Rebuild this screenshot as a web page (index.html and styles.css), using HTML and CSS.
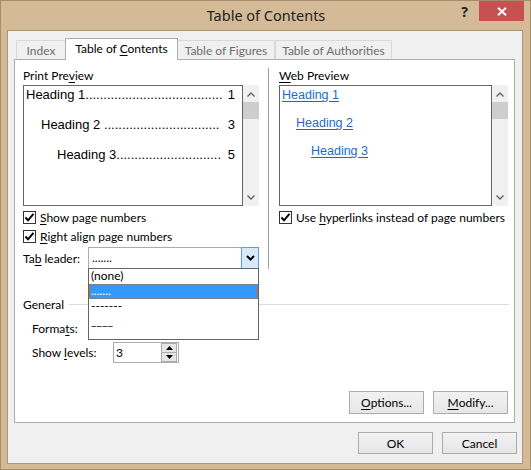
FILE: index.html
```html
<!DOCTYPE html>
<html lang="en">
<head>
<meta charset="utf-8">
<title>Table of Contents</title>
<link rel="stylesheet" href="styles.css">
</head>
<body>
<div class="window">
  <div class="titlebar">
    <div class="tb-spacer"></div>
    <div class="title">Table of Contents</div>
    <div class="tb-controls">
      <div class="help">?</div>
      <div class="close">
        <svg width="10" height="9" viewBox="0 0 10 9"><path d="M1 0.8 L9 8.2 M9 0.8 L1 8.2" stroke="#fff" stroke-width="1.9" fill="none"/></svg>
      </div>
    </div>
  </div>
  <div class="client">
    <div class="tabs">
      <div class="tab t-index">Index</div>
      <div class="tab active t-toc">Table of <u>C</u>ontents</div>
      <div class="tab t-fig">Table of Figures</div>
      <div class="tab t-auth">Table of Authorities</div>
    </div>
    <div class="panel">
      <div class="top">
        <div class="col col-left">
          <div class="label">Print Pre<u>v</u>iew</div>
          <div class="preview">
            <div class="pbox">
              <div class="toc lv1"><span>Heading 1</span><span class="dots">......................................</span><span class="num">1</span></div>
              <div class="toc lv2"><span>Heading 2 </span><span class="dots">................................</span><span class="num">3</span></div>
              <div class="toc lv3"><span>Heading 3</span><span class="dots">.............................</span><span class="num">5</span></div>
            </div>
            <div class="scrollbar">
              <svg class="arr" width="8" height="5" viewBox="0 0 8 5"><polyline points="0.5,4.5 4,1 7.5,4.5" fill="none" stroke="#606060" stroke-width="1.3"/></svg>
              <div class="thumb"></div>
              <div class="track"></div>
              <svg class="arr" width="8" height="5" viewBox="0 0 8 5"><polyline points="0.5,0.5 4,4 7.5,0.5" fill="none" stroke="#606060" stroke-width="1.3"/></svg>
            </div>
          </div>
          <div class="checks">
            <div class="check">
              <span class="cbox"><svg width="11" height="11" viewBox="0 0 11 11"><polyline points="1.5,5.5 4,8.3 9.5,1.8" fill="none" stroke="#000" stroke-width="2"/></svg></span>
              <span><u>S</u>how page numbers</span>
            </div>
            <div class="check">
              <span class="cbox"><svg width="11" height="11" viewBox="0 0 11 11"><polyline points="1.5,5.5 4,8.3 9.5,1.8" fill="none" stroke="#000" stroke-width="2"/></svg></span>
              <span><u>R</u>ight align page numbers</span>
            </div>
          </div>
          <div class="leader-row">
            <span class="leader-label">Ta<u>b</u> leader:</span>
            <div class="combo open">
              <span class="combo-text">.......</span>
              <span class="combo-btn"><svg width="9" height="6" viewBox="0 0 9 6"><polyline points="1,1 4.5,4.5 8,1" fill="none" stroke="#000" stroke-width="2"/></svg></span>
              <div class="droplist">
                <div class="item">(none)</div>
                <div class="item selected">.......</div>
                <div class="item">-------</div>
                <div class="item">____</div>
              </div>
            </div>
          </div>
        </div>
        <div class="sep"></div>
        <div class="col col-right">
          <div class="label"><u>W</u>eb Preview</div>
          <div class="preview">
            <div class="pbox web">
              <div class="link lv1">Heading 1</div>
              <div class="link lv2">Heading 2</div>
              <div class="link lv3">Heading 3</div>
            </div>
            <div class="scrollbar">
              <svg class="arr" width="8" height="5" viewBox="0 0 8 5"><polyline points="0.5,4.5 4,1 7.5,4.5" fill="none" stroke="#606060" stroke-width="1.3"/></svg>
              <div class="thumb"></div>
              <div class="track"></div>
              <svg class="arr" width="8" height="5" viewBox="0 0 8 5"><polyline points="0.5,0.5 4,4 7.5,0.5" fill="none" stroke="#606060" stroke-width="1.3"/></svg>
            </div>
          </div>
          <div class="checks">
            <div class="check">
              <span class="cbox"><svg width="11" height="11" viewBox="0 0 11 11"><polyline points="1.5,5.5 4,8.3 9.5,1.8" fill="none" stroke="#000" stroke-width="2"/></svg></span>
              <span>Use <u>h</u>yperlinks instead of page numbers</span>
            </div>
          </div>
        </div>
      </div>
      <div class="general">
        <span>General</span>
        <span class="gline"></span>
      </div>
      <div class="frow formats-row">
        <span class="flabel">Forma<u>t</u>s:</span>
        <div class="combo plain"></div>
      </div>
      <div class="frow levels-row">
        <span class="flabel">Show <u>l</u>evels:</span>
        <div class="spin">
          <span class="spin-text">3</span>
          <span class="spin-btns">
            <span class="sb up"><svg width="7" height="4" viewBox="0 0 7 4"><polygon points="0,4 3.5,0 7,4" fill="#000"/></svg></span>
            <span class="sb down"><svg width="7" height="4" viewBox="0 0 7 4"><polygon points="0,0 3.5,4 7,0" fill="#000"/></svg></span>
          </span>
        </div>
      </div>
      <div class="panel-buttons">
        <div class="btn"><u>O</u>ptions...</div>
        <div class="btn"><u>M</u>odify...</div>
      </div>
    </div>
    <div class="dialog-buttons">
      <div class="btn">OK</div>
      <div class="btn">Cancel</div>
    </div>
  </div>
</div>
</body>
</html>
```

FILE: styles.css
```css
* { box-sizing: border-box; margin: 0; padding: 0; }
html, body { width: 531px; height: 470px; overflow: hidden; }
body {
  font-family: "Lato", "Noto Sans", sans-serif;
  font-size: 12px;
  color: #000;
  background: #d4ba96;
}
u { text-decoration: underline; text-underline-offset: 2px; }

.window {
  width: 531px;
  height: 470px;
  background: #d4ba96;
  border: 1px solid #a88d69;
  display: flex;
  flex-direction: column;
}

/* title bar */
.titlebar {
  height: 29px;
  display: grid;
  grid-template-columns: 1fr auto 1fr;
}
.title {
  font-family: "Noto Sans", sans-serif;
  font-size: 14.5px;
  line-height: 29px;
  color: #222;
  padding-left: 1px;
}
.tb-controls {
  display: flex;
  justify-content: flex-end;
  align-items: flex-start;
  padding-right: 6px;
}
.help {
  font-family: "Noto Sans", sans-serif;
  font-size: 14px;
  font-weight: bold;
  line-height: 22px;
  color: #222;
  margin-right: 11px;
}
.close {
  width: 45px;
  height: 20px;
  background: #c75050;
  display: flex;
  align-items: center;
  justify-content: center;
}

/* client */
.client {
  margin: 0 7px 5px 6px;
  height: 434px;
  border: 1px solid #ae9574;
  background: #f0f0f0;
  padding: 7px 7px 0 6px;
  display: flex;
  flex-direction: column;
}

.tabs {
  height: 21px;
  display: flex;
  align-items: flex-end;
  padding-left: 2px;
}
.tab {
  height: 19px;
  border: 1px solid #d9d9d9;
  border-bottom: none;
  background: #f0f0f0;
  color: #6d6d6d;
  line-height: 19px;
  text-align: center;
  white-space: nowrap;
}
.t-index { width: 50px; }
.t-toc { width: 113px; margin-left: -1px; }
.t-fig { width: 98px; margin-left: -1px; }
.t-auth { width: 117px; margin-left: 0; }
.tab.active {
  height: 22px;
  margin-bottom: -1px;
  background: #fff;
  border-color: #acacac;
  color: #000;
  position: relative;
  z-index: 2;
  line-height: 20px;
}

.panel {
  height: 364px;
  border: 1px solid #adadad;
  background: #fff;
  display: flex;
  flex-direction: column;
}

.top {
  display: flex;
  padding-bottom: 24px;
}
.col { padding-top: 9px; }
.col-left { width: 244px; padding-left: 8px; }
.col-right { width: 240px; padding-left: 10px; }
.sep {
  width: 1px;
  margin-top: 8px;
  margin-left: 9px;
  background: #a0a0a0;
}
.label { height: 16px; line-height: 14px; }

.preview { display: flex; height: 121px; }
.pbox {
  border: 1px solid #646464;
  flex: 1;
  background: #fff;
  padding-right: 7px;
  font-family: "Liberation Sans", Arial, sans-serif;
  font-size: 13px;
}
.col-left .pbox { width: 220px; flex: none; }
.pbox.web { width: 213px; flex: none; padding-right: 0; }
.scrollbar {
  width: 16px;
  background: #f0f0f0;
  display: flex;
  flex-direction: column;
  align-items: center;
}
.scrollbar .arr { margin-top: 7px; flex: none; }
.scrollbar .arr:last-child { margin-top: 0; margin-bottom: 6px; }
.thumb { width: 16px; height: 17px; background: #cdcdcd; margin-top: 5px; }
.track { flex: 1; }

.toc {
  display: flex;
  height: 18px;
  line-height: 18px;
  margin-bottom: 12px;
  white-space: pre;
}
.toc.lv1 { padding-left: 2px; }
.toc.lv2 { padding-left: 17px; }
.toc.lv3 { padding-left: 33px; }
.num { margin-left: auto; }

.link {
  height: 18px;
  line-height: 18px;
  margin-bottom: 10px;
  color: #1d6ac5;
  text-decoration: underline;
  font-size: 12.5px;
  text-underline-offset: 2px;
}
.link.lv1 { padding-left: 2px; }
.link.lv2 { padding-left: 16px; }
.link.lv3 { padding-left: 31px; }

.checks { margin-top: 2px; }
.check {
  height: 19px;
  display: flex;
  align-items: center;
  gap: 4px;
  white-space: nowrap;
}
.cbox {
  width: 13px;
  height: 13px;
  border: 1px solid #333;
  background: #fff;
  display: flex;
  align-items: center;
  justify-content: center;
}

.leader-row {
  margin-top: 1px;
  height: 22px;
  display: flex;
  align-items: center;
}
.leader-label { width: 65px; }
.combo {
  width: 171px;
  height: 22px;
  border: 1px solid #acacac;
  background: #fff;
  position: relative;
  display: flex;
  align-items: center;
}
.combo-text { flex: 1; padding-left: 3px; line-height: 18px; }
.combo-btn {
  width: 18px;
  height: 22px;
  margin: -1px -1px -1px 0;
  border: 1px solid #569de5;
  background: #d8e9fb;
  display: flex;
  align-items: center;
  justify-content: center;
}
.droplist {
  position: absolute;
  left: -1px;
  top: 20px;
  width: 171px;
  height: 72px;
  border: 1px solid #646464;
  background: #fff;
  z-index: 5;
}
.item {
  height: 15px;
  line-height: 14px;
  padding-left: 2px;
  white-space: nowrap;
}
.item.selected {
  background: #3399ff;
  color: #fff;
  border: 1px dotted #c56a1c;
  padding-left: 1px;
  line-height: 12px;
}

.general {
  margin-top: 3px;
  height: 16px;
  display: flex;
  align-items: center;
  padding-left: 8px;
  padding-right: 5px;
}
.gline { flex: 1; height: 1px; background: #dcdcdc; margin-left: 5px; }

.frow { display: flex; align-items: center; padding-left: 17px; }
.flabel { width: 56px; }
.formats-row { margin-top: 5px; height: 22px; }
.levels-row { margin-top: 3px; height: 21px; }
.levels-row .flabel { width: 81px; }
.spin {
  width: 66px;
  height: 21px;
  border: 1px solid #acacac;
  background: #fff;
  display: flex;
  align-items: center;
}
.spin-text { flex: 1; padding-left: 2px; }
.spin-btns {
  width: 16px;
  height: 19px;
  margin-right: 1px;
  display: flex;
  flex-direction: column;
}
.sb {
  flex: 1;
  background: #e6e6e6;
  border: 1px solid #acacac;
  display: flex;
  align-items: center;
  justify-content: center;
}
.sb.down { border-top: none; }

.btn {
  width: 75px;
  height: 23px;
  border: 1px solid #acacac;
  background: linear-gradient(#f2f2f2, #e6e6e6);
  display: flex;
  align-items: center;
  justify-content: center;
  white-space: nowrap;
}
.panel-buttons {
  margin-top: auto;
  padding: 0 6px 8px 0;
  display: flex;
  justify-content: flex-end;
  gap: 9px;
}
.dialog-buttons {
  margin-top: 9px;
  margin-right: -2px;
  display: flex;
  justify-content: flex-end;
  gap: 9px;
}
.dialog-buttons .btn { height: 22px; }
```
